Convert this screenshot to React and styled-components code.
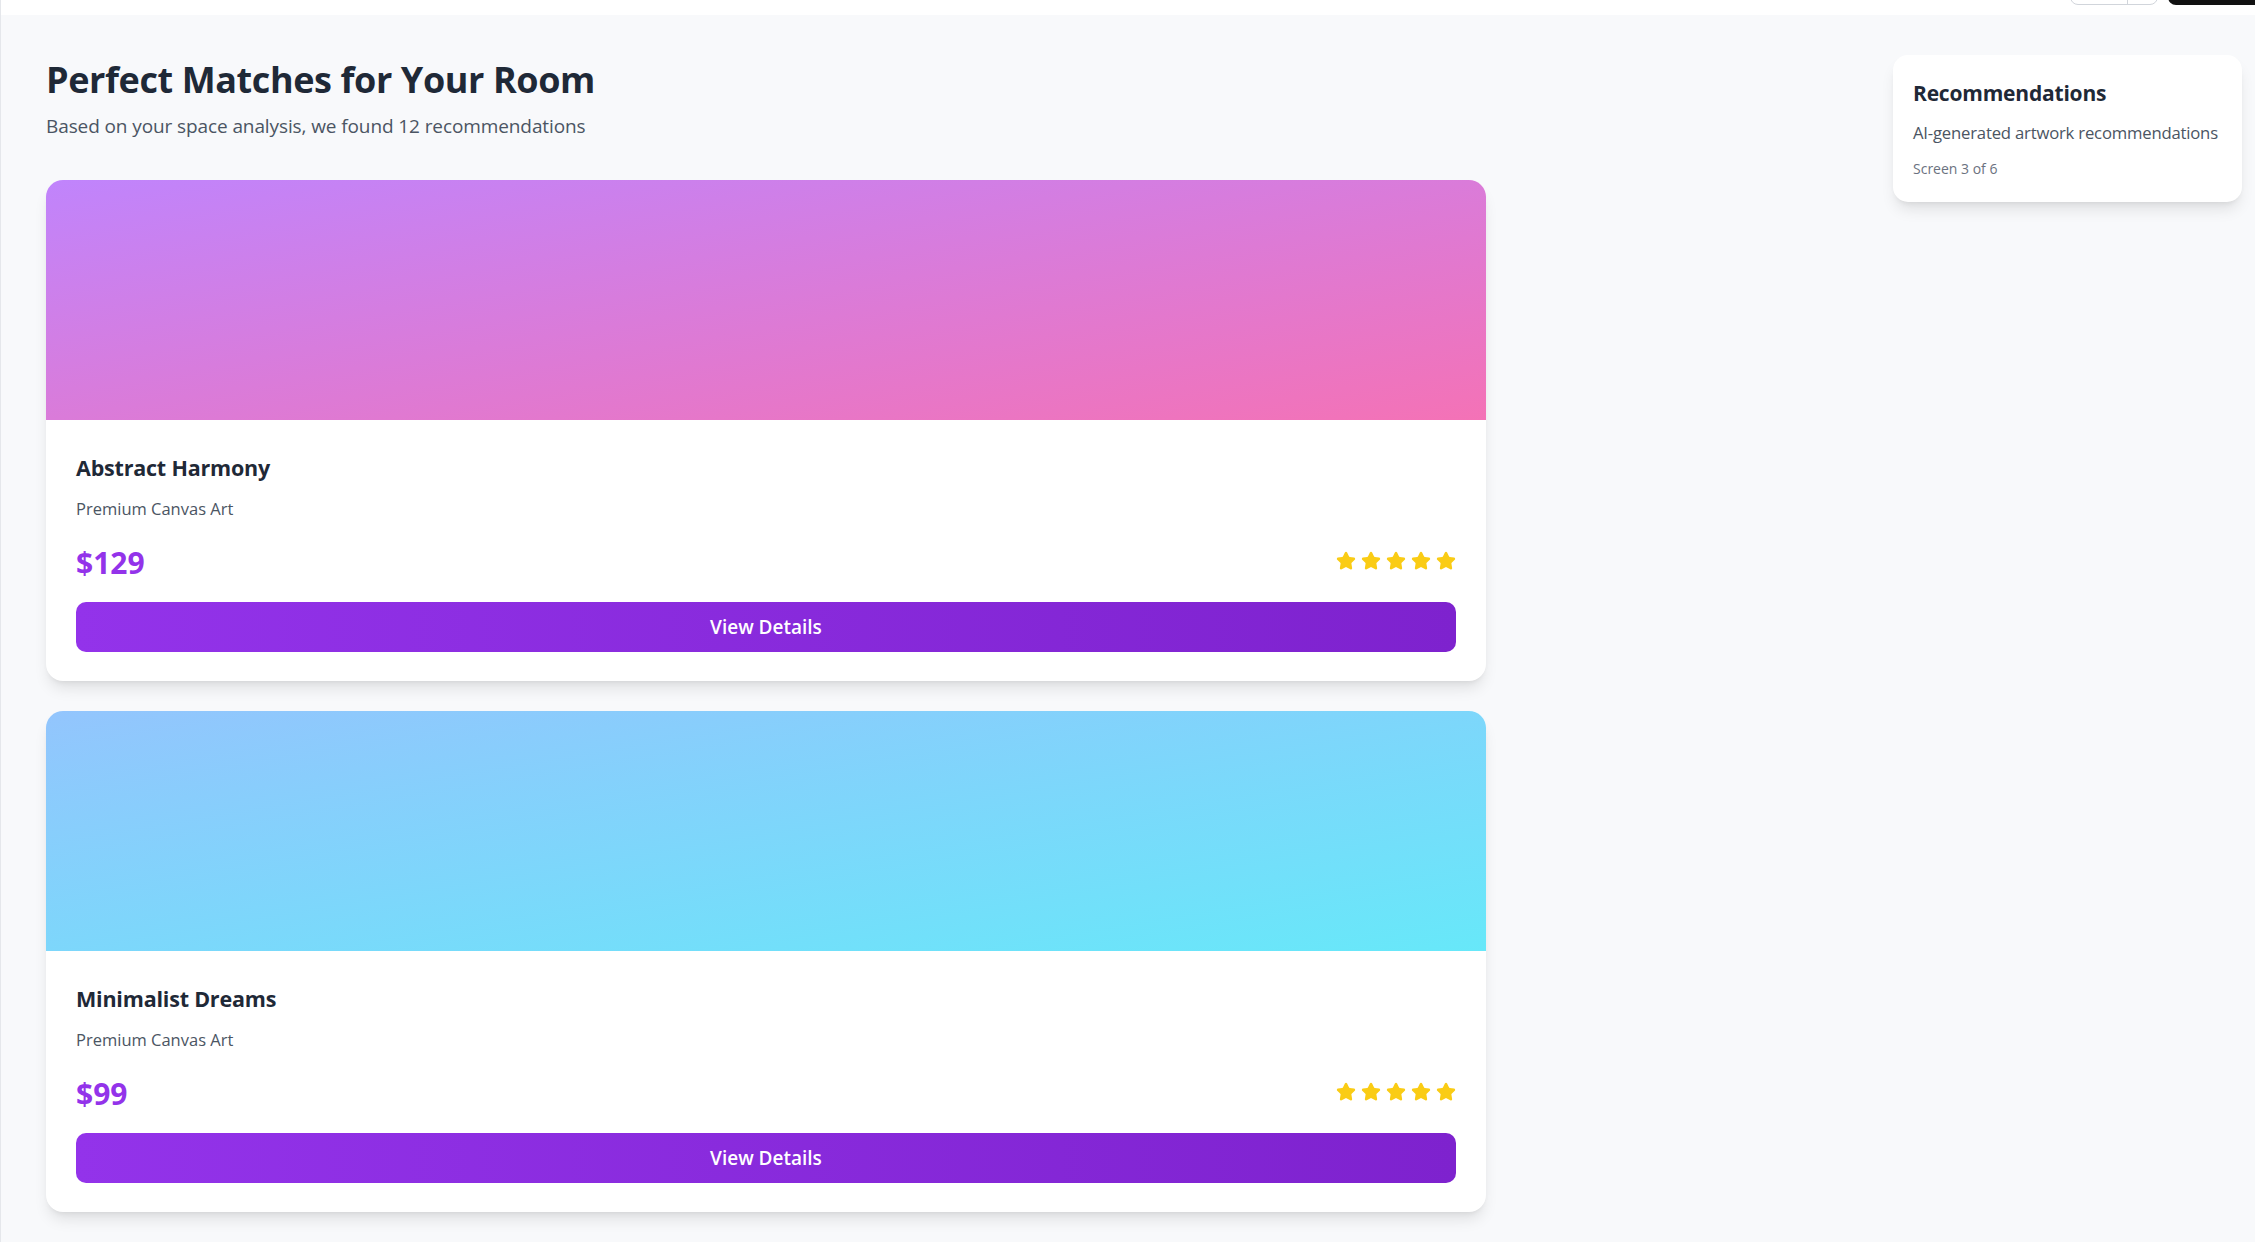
import React from 'react';
import styled, { createGlobalStyle } from 'styled-components';
import { Star } from 'lucide-react';

const GlobalStyle = createGlobalStyle`
  html, body {
    margin: 0;
    padding: 0;
    background: #f8f9fb;
  }
  body {
    font-family: "Open Sans", "Noto Sans", Arial, sans-serif;
    color: #1f2937;
  }
  * { box-sizing: border-box; }
`;

const Shell = styled.div`
  min-height: 100vh;
  border-left: 1px solid #e5e7eb;
  background: #f8f9fb;
`;

const TopBar = styled.header`
  height: 15px;
  overflow: hidden;
  background: #ffffff;
  display: flex;
  justify-content: flex-end;
  align-items: flex-end;
  gap: 10px;
  padding-bottom: 10px;
`;

const ButtonGroup = styled.div`
  display: flex;
  height: 40px;
  border: 1px solid #d1d5db;
  border-radius: 8px;
  overflow: hidden;
  background: #fff;
`;

const GroupButton = styled.div`
  width: ${({ wide }) => (wide ? '56px' : '30px')};
  border-left: ${({ first }) => (first ? 'none' : '1px solid #d1d5db')};
`;

const DarkButton = styled.div`
  width: 87px;
  height: 40px;
  border-radius: 8px 0 0 8px;
  background: #111111;
`;

const Layout = styled.div`
  display: flex;
  align-items: flex-start;
  padding: 0 13px 0 45px;
`;

const Main = styled.main`
  width: 1440px;
  flex: none;
  padding-top: 43px;
`;

const Title = styled.h1`
  margin: 0;
  font-size: 36px;
  line-height: 44px;
  font-weight: 700;
  color: #1f2937;
  letter-spacing: -0.4px;
`;

const Subtitle = styled.p`
  margin: 10px 0 0;
  font-size: 19px;
  line-height: 28px;
  color: #4b5563;
  letter-spacing: -0.1px;
`;

const CardList = styled.div`
  display: flex;
  flex-direction: column;
  gap: 30px;
  margin-top: 40px;
`;

const Card = styled.article`
  background: #ffffff;
  border-radius: 17px;
  overflow: hidden;
  box-shadow: 0 10px 15px -3px rgba(0, 0, 0, 0.1), 0 4px 6px -4px rgba(0, 0, 0, 0.1);
`;

const Artwork = styled.div`
  height: 240px;
  background: linear-gradient(to bottom right, ${({ from }) => from}, ${({ to }) => to});
`;

const CardBody = styled.div`
  padding: 31px 30px 29px;
`;

const ArtTitle = styled.h2`
  margin: 0;
  font-size: 21.5px;
  line-height: 34px;
  font-weight: 700;
  color: #1f2937;
  letter-spacing: -0.2px;
`;

const ArtType = styled.p`
  margin: 12px 0 0;
  font-size: 16.5px;
  line-height: 24px;
  color: #4b5563;
`;

const PriceRow = styled.div`
  display: flex;
  justify-content: space-between;
  align-items: center;
  margin-top: 22px;
  height: 40px;
`;

const Price = styled.span`
  font-size: 30px;
  line-height: 40px;
  font-weight: 700;
  color: #9333ea;
`;

const Stars = styled.div`
  display: flex;
  gap: 5px;
  margin-top: -4px;
`;

const DetailsButton = styled.button`
  display: block;
  width: 100%;
  height: 50px;
  margin-top: 19px;
  border: none;
  border-radius: 10px;
  background: linear-gradient(to right, #9333ea, #7e22ce);
  color: #ffffff;
  font-family: inherit;
  font-size: 19px;
  font-weight: 600;
  cursor: pointer;
`;

const InfoPanel = styled.aside`
  width: 349px;
  margin: 40px 0 0 auto;
  padding: 23px 18px 23px 20px;
  background: #ffffff;
  border-radius: 15px;
  box-shadow: 0 10px 15px -3px rgba(0, 0, 0, 0.1), 0 4px 6px -4px rgba(0, 0, 0, 0.1);
`;

const PanelTitle = styled.h3`
  margin: 0;
  font-size: 21px;
  line-height: 30px;
  font-weight: 700;
  color: #1f2937;
  letter-spacing: -0.2px;
`;

const PanelText = styled.p`
  margin: 13px 0 0;
  font-size: 16.7px;
  line-height: 24px;
  color: #4b5563;
  letter-spacing: -0.2px;
  white-space: nowrap;
`;

const PanelMeta = styled.p`
  margin: 14px 0 0;
  font-size: 14px;
  line-height: 20px;
  color: #6b7280;
`;

const artworks = [
  { title: 'Abstract Harmony', price: '$129', from: '#c084fc', to: '#f472b6' },
  { title: 'Minimalist Dreams', price: '$99', from: '#93c5fd', to: '#67e8f9' },
  { title: 'Golden Horizon', price: '$149', from: '#fde047', to: '#fb923c' },
];

const Rating = () => (
  <Stars>
    {[0, 1, 2, 3, 4].map((i) => (
      <Star key={i} size={20} color="#facc15" fill="#facc15" strokeWidth={2} />
    ))}
  </Stars>
);

const ArtCard = ({ title, price, from, to }) => (
  <Card>
    <Artwork from={from} to={to} />
    <CardBody>
      <ArtTitle>{title}</ArtTitle>
      <ArtType>Premium Canvas Art</ArtType>
      <PriceRow>
        <Price>{price}</Price>
        <Rating />
      </PriceRow>
      <DetailsButton>View Details</DetailsButton>
    </CardBody>
  </Card>
);

const App = () => (
  <Shell>
    <GlobalStyle />
    <TopBar>
      <ButtonGroup>
        <GroupButton wide first />
        <GroupButton />
      </ButtonGroup>
      <DarkButton />
    </TopBar>
    <Layout>
      <Main>
        <Title>Perfect Matches for Your Room</Title>
        <Subtitle>Based on your space analysis, we found 12 recommendations</Subtitle>
        <CardList>
          {artworks.map((art) => (
            <ArtCard key={art.title} {...art} />
          ))}
        </CardList>
      </Main>
      <InfoPanel>
        <PanelTitle>Recommendations</PanelTitle>
        <PanelText>AI-generated artwork recommendations</PanelText>
        <PanelMeta>Screen 3 of 6</PanelMeta>
      </InfoPanel>
    </Layout>
  </Shell>
);

export default App;
